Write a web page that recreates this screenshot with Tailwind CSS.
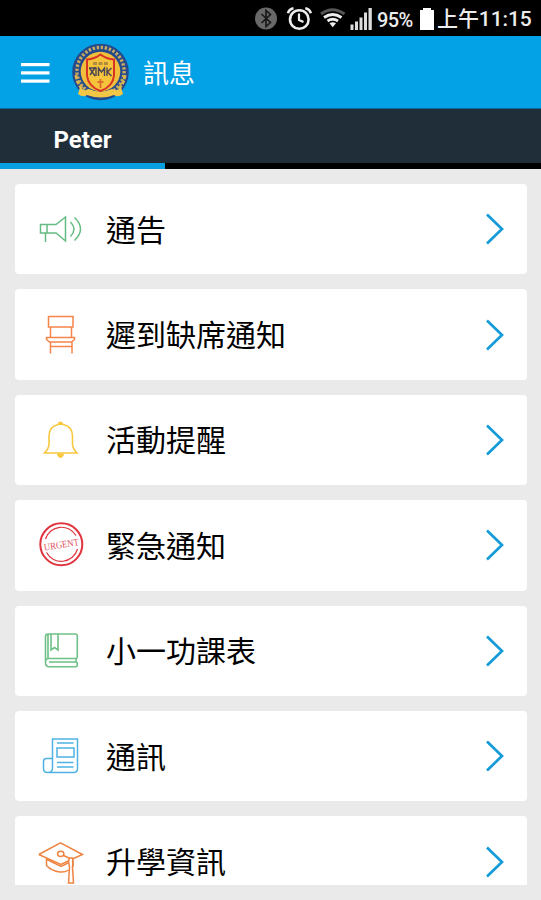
<!DOCTYPE html>
<html lang="zh-Hant">

<head>
  <meta charset="UTF-8">
  <meta name="viewport" content="width=device-width, initial-scale=1.0">
  <title>訊息</title>
  <script src="https://cdn.jsdelivr.net/npm/@tailwindcss/browser@4"></script>
</head>

<body class="h-[900px] overflow-hidden bg-[#eaeaea] font-['Roboto','Noto_Sans_CJK_TC',sans-serif]">

  <!-- Status bar -->
  <div class="flex h-9 items-center justify-end bg-black pr-[9px] text-[#ececec]">
    <svg class="h-9 w-[120px] shrink-0" viewBox="254 0 120 36" fill="none">
      <!-- Bluetooth -->
      <circle cx="266" cy="18.500" r="11" fill="#686868" />
      <path d="M261.500 14l9 8.500-4.500 4v-16l4.500 4-9 8.500" stroke="#161616" stroke-width="1.600" />
      <!-- Alarm -->
      <circle cx="299.300" cy="19.500" r="9.300" stroke="#eee" stroke-width="2.600" />
      <path d="M299 13.500v6.500l4.500 2" stroke="#eee" stroke-width="2.200" />
      <path d="M288 13.200q1-4 5.500-5M310.800 13.200q-1-4-5.500-5" stroke="#eee" stroke-width="2.600" />
      <!-- Wifi -->
      <path d="M321 14q11.500-8.500 23.500 0" stroke="#555" stroke-width="2.800" />
      <path d="M324 17.500q8.700-6 17.500 0M327.500 21q5.200-3.500 10.500 0" stroke="#eee" stroke-width="2.800" />
      <path d="M329.500 23.300q3.300-2 6.500 0l-3.300 4z" fill="#eee" />
      <!-- Signal -->
      <path d="M350.500 24.500h3v5.500h-3zM355 21.500h3v8.500h-3zM359.500 17.500h3v12.500h-3zM364 12.500h3v17.500h-3zM368.500 8h3.300v22h-3.300z" fill="#ddd" />
    </svg>
    <span class="ml-[3px] w-[38px] whitespace-nowrap text-[20px] font-medium leading-9 pt-[3px] tracking-[-0.6px]">95%</span>
    <svg class="ml-[4px] h-9 w-[16px] shrink-0" viewBox="419 0 16 36">
      <path d="M423 8h8v2h3v20h-14V10h3z" fill="#fff" />
    </svg>
    <span class="ml-[2px] w-[95px] whitespace-nowrap text-[21px] font-medium leading-9 pt-[2px] tracking-[-0.1px]">上午11:15</span>
  </div>

  <!-- Header -->
  <header class="flex h-[73px] items-center border-b border-[#0a6f9e] bg-[#03a2e7] pl-[21px]">
    <svg class="mt-px h-[22px] w-[29px]" viewBox="0 0 29 22" fill="#fff">
      <rect y="1" width="28.500" height="3.200" />
      <rect y="9.300" width="28.500" height="3.200" />
      <rect y="17.500" width="28.500" height="3.200" />
    </svg>
    <svg class="ml-[21px] size-[59px]" viewBox="0 0 59 59" fill="none">
      <circle cx="29.500" cy="29" r="28.300" fill="#244a8c" />
      <circle cx="29.500" cy="28" r="23.600" stroke="#c5aa62" stroke-width="3.400" stroke-dasharray="2.400 1.700" />
      <circle cx="29.500" cy="28.500" r="19.800" fill="#f0bd3c" />
      <path d="M5 32q1 9 7 14M54 32q-1 9-7 14" stroke="#d8b450" stroke-width="3" stroke-dasharray="4 1.500" />
      <path d="M9 44q3 5 9 2q11 5 23 0q6 3 9-2l2 7q-5 4-9 1q-13 5-27 0q-4 3-9-1z" fill="#f2c747" />
      <path d="M29.500 11.500q6 4.500 13.500 5v16q-1 11-13.500 15.500q-12.500-4.500-13.500-15.500v-16q7.500-.5 13.500-5z" fill="#f5c33c" stroke="#d83224" stroke-width="2" />
      <path d="M22 20.500h15" stroke="#b08d3e" stroke-width="3" stroke-dasharray="4 1.500" />
      <path d="M18.500 25l5.500 8M24.500 24l-5.500 8M18 25h7v8M27.500 33v-8l3 4 3-4v8M36 24.500v8.500M40.500 25l-4 4 4 4" stroke="#4a4653" stroke-width="1.400" />
      <path d="M29.500 36v9M26.500 39h6" stroke="#dd6b2b" stroke-width="1.800" />
    </svg>
    <h1 class="ml-[13px] pt-[4px] text-[26px] leading-[36px] text-white">訊息</h1>
  </header>

  <!-- Tabs -->
  <nav class="h-[60px] bg-black">
    <div class="h-[54px] bg-[#202e3a]">
      <div class="w-[165px] pt-[2px] text-center text-[24px] font-bold leading-[58px] text-white">Peter</div>
    </div>
    <div class="h-[6px] w-[165px] bg-[#079fe2]"></div>
  </nav>

  <!-- Message categories -->
  <main class="flex h-[716px] flex-col gap-[15px] overflow-hidden pl-[15px] pr-[14px] pt-[15px] text-[30px] text-black">

    <div class="flex h-[90.400px] shrink-0 items-center rounded bg-white pl-[22px] pr-[22px]">
      <svg class="size-12" viewBox="0 0 48 48" fill="none" stroke="#66bb83" stroke-width="1.500">
        <path d="M3.500 19.500h6.500v8.500h-6.500zM10 19.500h9l9.500-7.500v24l-9.500-8h-9M8.500 28v9" />
        <path d="M33.500 17q7 7 0 14.500M37.500 12.500q12 11.500 0 23" />
      </svg>
      <span class="ml-[21px] flex-1 pt-[2px]">通告</span>
      <svg class="h-[32px] w-[20px]" viewBox="0 0 20 32" fill="none" stroke="#159bd7" stroke-width="2.700"><path d="M2 1.500L17 16 2 30.500" /></svg>
    </div>

    <div class="flex h-[90.400px] shrink-0 items-center rounded bg-white pl-[22px] pr-[22px]">
      <svg class="size-12" viewBox="0 0 48 48" fill="none" stroke="#f58549" stroke-width="1.500">
        <path d="M11.500 5.500h24.500v10.500h-24.500zM13.500 16v10.500M34.500 16v10.500M9.500 26.500h28v2l-3 2.500h-22l-3-2.500zM13.500 31v11.500M35 31v11.500M13.500 35.500h21.500" />
      </svg>
      <span class="ml-[21px] flex-1 pt-[2px]">遲到缺席通知</span>
      <svg class="h-[32px] w-[20px]" viewBox="0 0 20 32" fill="none" stroke="#159bd7" stroke-width="2.700"><path d="M2 1.500L17 16 2 30.500" /></svg>
    </div>

    <div class="flex h-[90.400px] shrink-0 items-center rounded bg-white pl-[22px] pr-[22px]">
      <svg class="size-12" viewBox="0 0 48 48" fill="none" stroke="#f8c83e" stroke-width="1.600">
        <path d="M21.500 8.500q-9.500 2-9.500 11.500v8q0 4.500-4.500 9h32.500q-4.500-4.500-4.500-9v-8q0-9.500-9.500-11.500" />
        <path d="M21 8.500q0-2.500 2.500-2.500t2.500 2.500zM20.500 38q.5 3.500 3 3.500t3-3.500z" fill="#f8c83e" stroke-width="1" />
      </svg>
      <span class="ml-[21px] flex-1 pt-[2px]">活動提醒</span>
      <svg class="h-[32px] w-[20px]" viewBox="0 0 20 32" fill="none" stroke="#159bd7" stroke-width="2.700"><path d="M2 1.500L17 16 2 30.500" /></svg>
    </div>

    <div class="flex h-[90.400px] shrink-0 items-center rounded bg-white pl-[22px] pr-[22px]">
      <svg class="size-12" viewBox="0 0 48 48" fill="none" stroke="#e0343f">
        <circle cx="24.300" cy="23.300" r="21" stroke-width="2" />
        <path d="M8.500 18a16.800 16.800 0 0 1 30.500-3.500M40.500 28a16.800 16.800 0 0 1-31 3.500" stroke-width="1.200" />
        <text x="24.300" y="27" text-anchor="middle" textLength="35" lengthAdjust="spacingAndGlyphs" transform="rotate(-9 24.300 23.300)" fill="#e0505a" stroke="none" class="font-['Liberation_Serif',serif] text-[10px]">URGENT</text>
      </svg>
      <span class="ml-[21px] flex-1 pt-[2px]">緊急通知</span>
      <svg class="h-[32px] w-[20px]" viewBox="0 0 20 32" fill="none" stroke="#159bd7" stroke-width="2.700"><path d="M2 1.500L17 16 2 30.500" /></svg>
    </div>

    <div class="flex h-[90.400px] shrink-0 items-center rounded bg-white pl-[22px] pr-[22px]">
      <svg class="size-12" viewBox="0 0 48 48" fill="none" stroke="#6fc088" stroke-width="1.600">
        <path d="M11 7h27.500q1.800 0 1.800 1.800v21.200q0 1.500-1.800 1.500h-27M11 7q-2.500 0-2.500 2.500v26q0 4.200 3.500 4.200h26.500q1.800 0 1.800-1.700v-1.500q0-1.500-1.800-1.500h-26.500M8.500 35q0-3.500 3-3.500M11 7v24.500M39 31.500v4" />
        <path d="M14 7v16l3.500-2.500 3.500 2.500v-16" />
      </svg>
      <span class="ml-[21px] flex-1 pt-[2px]">小一功課表</span>
      <svg class="h-[32px] w-[20px]" viewBox="0 0 20 32" fill="none" stroke="#159bd7" stroke-width="2.700"><path d="M2 1.500L17 16 2 30.500" /></svg>
    </div>

    <div class="flex h-[90.400px] shrink-0 items-center rounded bg-white pl-[22px] pr-[22px]">
      <svg class="size-12" viewBox="0 0 48 48" fill="none" stroke="#4fb2e3" stroke-width="1.500">
        <path d="M15.500 36v-29h25v29.500q0 4-4 4h-26q-4 0-4-4v-7q0-3 3-3h6M15.500 36q0 4.500-4.500 4.500" />
        <path d="M20 11h16.500M20 16h17v9h-17zM20 30.500h16.500M20 35h16.500" />
      </svg>
      <span class="ml-[21px] flex-1 pt-[2px]">通訊</span>
      <svg class="h-[32px] w-[20px]" viewBox="0 0 20 32" fill="none" stroke="#159bd7" stroke-width="2.700"><path d="M2 1.500L17 16 2 30.500" /></svg>
    </div>

    <div class="flex h-[90.400px] shrink-0 items-center rounded bg-white pl-[22px] pr-[22px]">
      <svg class="size-12" viewBox="0 0 48 48" fill="none" stroke="#ee8440" stroke-width="1.500">
        <path d="M1.800 16.500l21.700-11.700 22 11.700-10 4.500M1.800 16.500l22 10 7.500-3.500" />
        <path d="M9.500 20.500v7q5 5.500 13.500 6.500 5 .5 8.500-2M10 21.500l14 7 7-3.500M36 22v7" />
        <path d="M26.500 17.500l6.500 3M31.500 23l1-3h3l.5 4-.5 5 1 16h-5l1-16z" />
        <ellipse cx="23.700" cy="15.800" rx="3.200" ry="2.600" />
      </svg>
      <span class="ml-[21px] flex-1 pt-[2px]">升學資訊</span>
      <svg class="h-[32px] w-[20px]" viewBox="0 0 20 32" fill="none" stroke="#159bd7" stroke-width="2.700"><path d="M2 1.500L17 16 2 30.500" /></svg>
    </div>

  </main>
</body>

</html>
